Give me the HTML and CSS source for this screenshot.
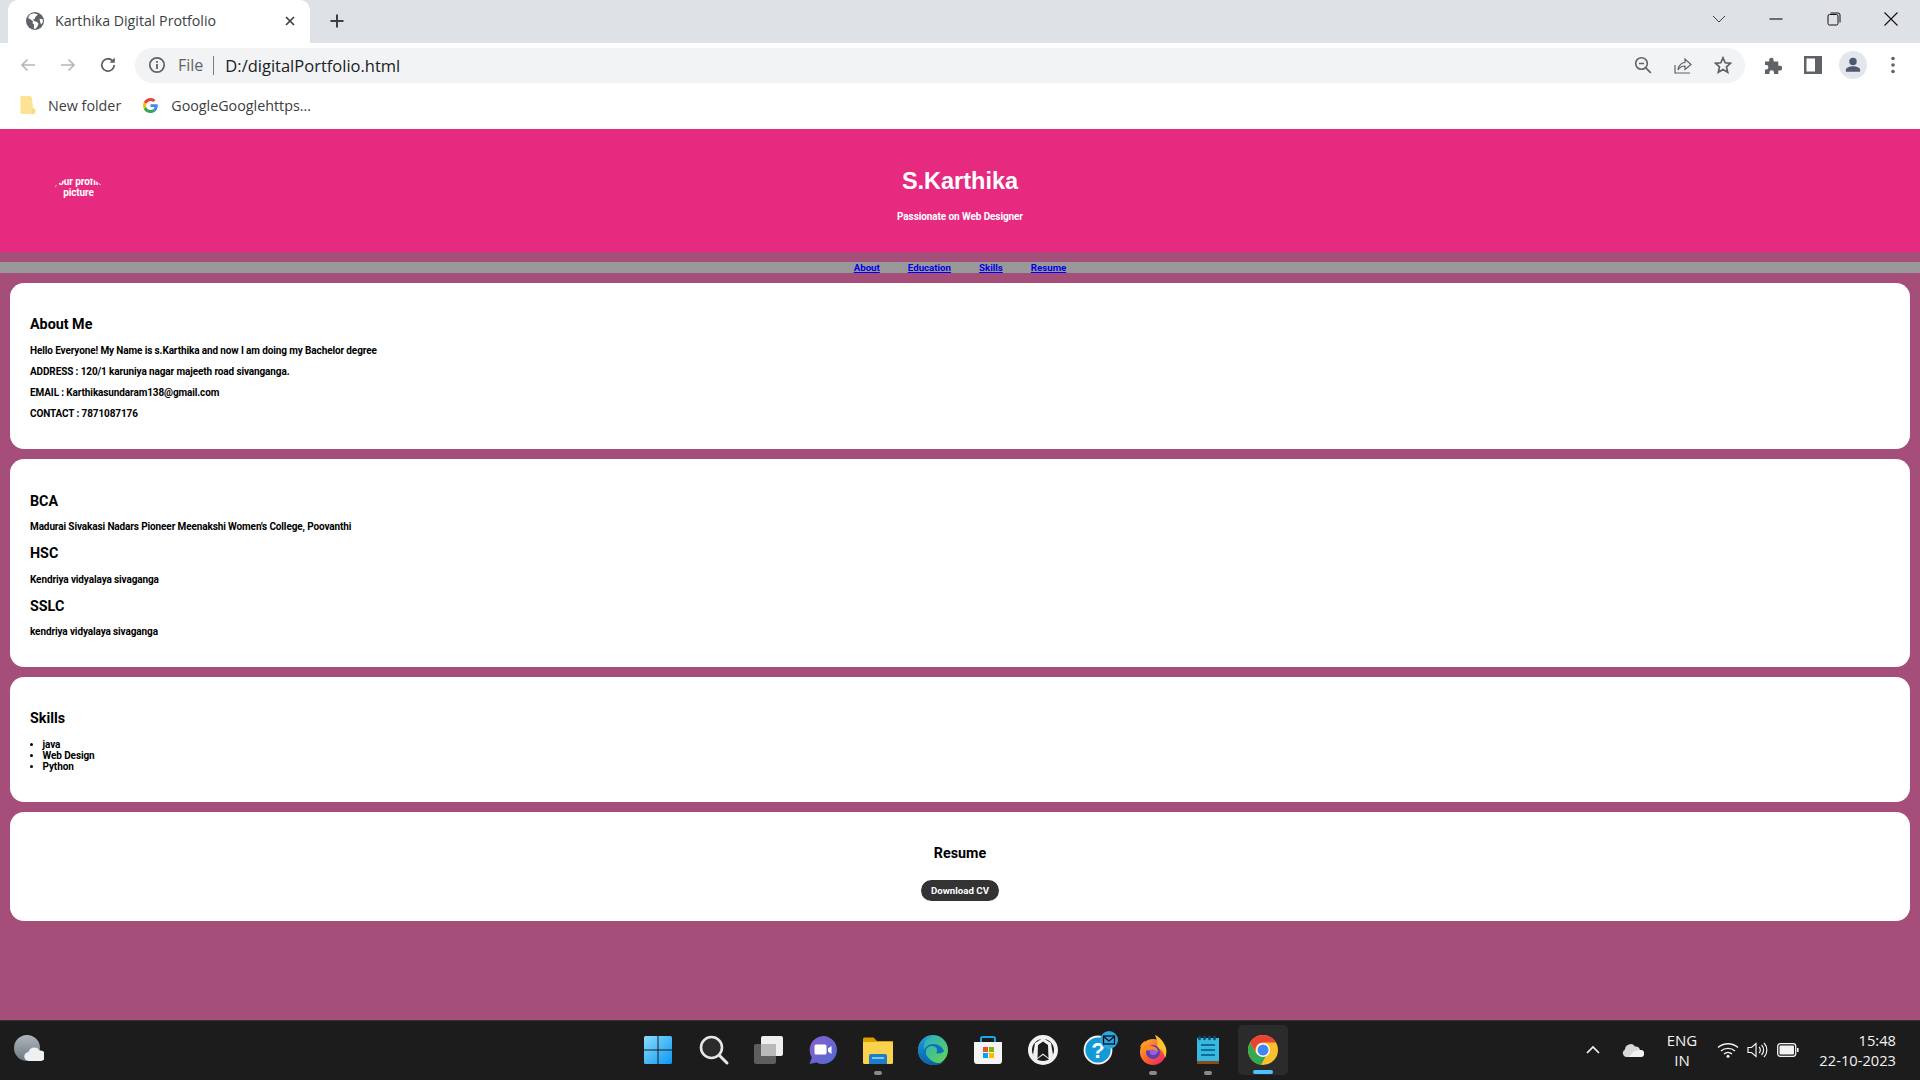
FILE: index.html
```html
<!DOCTYPE html>
<html lang="en">
<head>
<meta charset="utf-8">
<title>Karthika Digital Protfolio</title>
<link rel="stylesheet" href="styles.css">
</head>
<body>
<div class="screen">
  <div class="browser">
    <div class="tabstrip">
      <div class="tab">
        <svg class="tab-icon" viewBox="0 0 18 18"><circle cx="9" cy="9" r="9" fill="#5f6368"/><path d="M8 1.200 4 2.600 2 6l2.500 1.200L7 9.500l-.5 1.800 1.600 1.200-.3 4 1.600.4 2.200-2.600.9-2.600-1.300-1.600-3.200-1-1-1.400 1.600-.8.6-1.600L10.300 4 12 2.600Z" fill="#fff"/><path d="M13.500 6.800 16.700 7.200 16.900 10 15.200 12.500 14.200 10.200Z" fill="#fff"/></svg>
        <span class="tab-title">Karthika Digital Protfolio</span>
        <svg class="tab-close" viewBox="0 0 12 12"><path d="M2 2l8 8M10 2l-8 8" stroke="#3c4043" stroke-width="1.700" fill="none"/></svg>
      </div>
      <svg class="new-tab" viewBox="0 0 16 16"><path d="M8 1.500v13M1.500 8h13" stroke="#3c4043" stroke-width="2" fill="none"/></svg>
      <div class="window-controls">
        <span class="win-btn"><svg viewBox="0 0 14 14"><path d="M1 4l6 6 6-6" stroke="#3c4043" fill="none"/></svg></span>
        <span class="win-btn"><svg viewBox="0 0 14 14"><path d="M.5 7h13" stroke="#111" stroke-width="1.100" fill="none"/></svg></span>
        <span class="win-btn"><svg viewBox="0 0 14 14"><rect x="1" y="2.500" width="10" height="10.500" rx="1.500" stroke="#111" fill="none"/><path d="M3.500 1h7.500a2 2 0 0 1 2 2v7.500" stroke="#111" fill="none"/></svg></span>
        <span class="win-btn"><svg viewBox="0 0 14 14"><path d="M.5.5l13 13M13.500.5l-13 13" stroke="#111" stroke-width="1.100" fill="none"/></svg></span>
      </div>
    </div>
    <div class="toolbar">
      <span class="tool-btn"><svg viewBox="0 0 18 18"><path d="M16 9H3M8.500 3.500 3 9l5.500 5.500" stroke="#b4b7bb" stroke-width="1.700" fill="none"/></svg></span>
      <span class="tool-btn"><svg viewBox="0 0 18 18"><path d="M2 9h13M9.500 3.500 15 9l-5.500 5.500" stroke="#b4b7bb" stroke-width="1.700" fill="none"/></svg></span>
      <span class="tool-btn"><svg viewBox="0 0 18 18"><path d="M15.200 9a6.200 6.200 0 1 1-1.800-4.400" stroke="#5f6368" stroke-width="1.800" fill="none"/><path d="M15.800 1.500v5.300h-5.300Z" fill="#5f6368"/></svg></span>
      <div class="omnibox">
        <svg class="info-icon" viewBox="0 0 18 18"><circle cx="9" cy="9" r="7.200" stroke="#5f6368" stroke-width="1.700" fill="none"/><path d="M9 8v5M9 5v1.700" stroke="#5f6368" stroke-width="1.800"/></svg>
        <span class="scheme">File</span>
        <span class="sep"></span>
        <span class="url">D:/digitalPortfolio.html</span>
        <span class="omni-actions">
          <span class="tool-btn"><svg viewBox="0 0 18 18"><circle cx="7.500" cy="7.500" r="5.800" stroke="#5f6368" stroke-width="1.600" fill="none"/><path d="M5 7.500h5M11.800 11.800l5 5" stroke="#5f6368" stroke-width="1.700" fill="none"/></svg></span>
          <span class="tool-btn"><svg viewBox="0 0 18 18"><path d="M1 9v8h15M4 14c.5-5 4-7.500 7-7.500V3l6 5.500-6 5v-3.500c-3 0-5.500 1.500-7 4Z" stroke="#5f6368" stroke-width="1.200" fill="none"/></svg></span>
          <span class="tool-btn"><svg viewBox="0 0 18 18"><path d="M9 1.800l2.200 5 5.300.5-4 3.600 1.200 5.300L9 13.400l-4.700 2.800 1.200-5.300-4-3.600 5.300-.5Z" stroke="#5f6368" stroke-width="1.700" fill="none"/></svg></span>
        </span>
      </div>
      <div class="toolbar-actions">
        <span class="tool-btn"><svg viewBox="0 0 18 18"><path d="M1 5.500h4.200V4a2.200 2.200 0 0 1 4.400 0v1.500h4.700v4.300H16a2.300 2.300 0 0 1 0 4.600h-1.700V18H10v-1.500a2.300 2.300 0 0 0-4.600 0V18H1v-4.500h1.200a2.200 2.200 0 0 0 0-4.400H1Z" fill="#5f6368"/></svg></span>
        <span class="tool-btn"><svg viewBox="0 0 18 18"><rect width="18" height="18" fill="#5f6368"/><rect x="2.500" y="2.500" width="8.500" height="13" fill="#fff"/></svg></span>
        <span class="tool-btn"><span class="avatar"><svg viewBox="0 0 18 18"><circle cx="9" cy="5" r="4.200" fill="#4d5a70"/><path d="M1 16.500v-2.200c0-2.300 4.500-3.800 8-3.800s8 1.500 8 3.800v2.200Z" fill="#4d5a70"/></svg></span></span>
        <span class="tool-btn"><svg viewBox="0 0 18 18"><circle cx="9" cy="2.500" r="1.800" fill="#5f6368"/><circle cx="9" cy="9" r="1.800" fill="#5f6368"/><circle cx="9" cy="15.500" r="1.800" fill="#5f6368"/></svg></span>
      </div>
    </div>
    <div class="bookmarks">
      <span class="bookmark">
        <svg class="bm-folder" viewBox="0 0 16 18"><path d="M1.500 0h9l1.500 2 1 10.500h1.500a1 1 0 0 1 1 1V17a1 1 0 0 1-1 1H1.500a1 1 0 0 1-1-1V1a1 1 0 0 1 1-1Z" fill="#fde293"/><path d="M13 12.500V18" stroke="#f5cf6c"/></svg>
        New folder
      </span>
      <span class="bookmark bookmark-g">
        <svg class="bm-g" viewBox="0 0 48 48"><path fill="#EA4335" d="M24 9.500c3.500 0 6.700 1.200 9.200 3.600l6.900-6.900C35.900 2.400 30.500 0 24 0 14.600 0 6.500 5.400 2.600 13.200l8 6.200C12.400 13.700 17.700 9.500 24 9.500z"/><path fill="#4285F4" d="M47 24.500c0-1.600-.1-3.100-.4-4.500H24v9h12.900c-.6 3-2.200 5.500-4.700 7.200l7.700 6C44.400 37.900 47 31.800 47 24.500z"/><path fill="#FBBC05" d="M10.500 28.600c-.5-1.400-.8-3-.8-4.600s.3-3.200.8-4.600l-8-6.200C.9 16.500 0 20.100 0 24s.9 7.500 2.600 10.800z"/><path fill="#34A853" d="M24 48c6.500 0 11.900-2.100 15.900-5.800l-7.700-6c-2.200 1.400-4.900 2.300-8.200 2.300-6.300 0-11.600-4.200-13.500-9.900l-8 6.200C6.500 42.600 14.600 48 24 48z"/></svg>
        GoogleGooglehttps...
      </span>
    </div>
  </div>

  <main class="page">
    <header class="hero">
      <div class="logo">your profile picture</div>
      <div class="hero-center">
        <h1 class="hero-title">S.Karthika</h1>
        <p class="hero-sub">Passionate on Web Designer</p>
      </div>
    </header>
    <nav class="nav">
      <a href="#about">About</a>
      <a href="#education">Education</a>
      <a href="#skills">Skills</a>
      <a href="#resume">Resume</a>
    </nav>
    <section class="card" id="about">
      <h2 class="heading">About Me</h2>
      <p class="line">Hello Everyone! My Name is s.Karthika and now I am doing my Bachelor degree</p>
      <p class="line">ADDRESS : 120/1 karuniya nagar majeeth road sivanganga.</p>
      <p class="line">EMAIL : Karthikasundaram138@gmail.com</p>
      <p class="line">CONTACT : 7871087176</p>
    </section>
    <section class="card card-edu" id="education">
      <h3 class="heading">BCA</h3>
      <p class="line">Madurai Sivakasi Nadars Pioneer Meenakshi Women's College, Poovanthi</p>
      <h3 class="heading">HSC</h3>
      <p class="line">Kendriya vidyalaya sivaganga</p>
      <h3 class="heading">SSLC</h3>
      <p class="line">kendriya vidyalaya sivaganga</p>
    </section>
    <section class="card" id="skills">
      <h2 class="heading">Skills</h2>
      <ul class="skill-list">
        <li>java</li>
        <li>Web Design</li>
        <li>Python</li>
      </ul>
    </section>
    <section class="card card-resume" id="resume">
      <h2 class="heading">Resume</h2>
      <a class="download" href="#resume">Download CV</a>
    </section>
  </main>

  <footer class="taskbar">
    <div class="task-left">
      <svg class="weather" viewBox="0 0 30 30"><defs><linearGradient id="wg" x1="0" y1="0" x2="0" y2="1"><stop offset="0" stop-color="#aeb6bc"/><stop offset="1" stop-color="#6f7981"/></linearGradient></defs><circle cx="13" cy="13" r="13" fill="url(#wg)"/><path d="M15 26a4.500 4.500 0 0 1-.5-9 6 6 0 0 1 11-1.500A5.200 5.200 0 0 1 27 26Z" fill="#eef0f2"/></svg>
    </div>
    <div class="task-center">
      <span class="task-item"><svg viewBox="0 0 30 30"><defs><linearGradient id="st" x1="0" y1="0" x2="1" y2="1"><stop offset="0" stop-color="#8adcfb"/><stop offset="1" stop-color="#0c98f2"/></linearGradient></defs><path d="M1 2.500A1.500 1.500 0 0 1 2.500 1h12v13.500H1ZM15.500 1h12A1.500 1.500 0 0 1 29 2.500v12H15.500ZM1 15.500h13.500V29h-12A1.500 1.500 0 0 1 1 27.500ZM15.500 15.500H29v12a1.500 1.500 0 0 1-1.500 1.500h-12Z" fill="url(#st)"/></svg></span>
      <span class="task-item"><svg viewBox="0 0 30 30"><circle cx="13.500" cy="12.500" r="10.500" fill="#2b2b2b" stroke="#e6e6e6" stroke-width="2.600"/><path d="M21.500 20.500 29 28" stroke="#e6e6e6" stroke-width="3" stroke-linecap="round"/></svg></span>
      <span class="task-item"><svg viewBox="0 0 30 30"><rect x="8" y="1" width="22" height="20" rx="2" fill="#efefef"/><rect x="1" y="9" width="22" height="20" rx="2" fill="#666" fill-opacity=".9"/><rect x="8" y="9" width="15" height="12" fill="#b9b9b9"/></svg></span>
      <span class="task-item"><svg viewBox="0 0 30 30"><defs><linearGradient id="ch" x1="0" y1="0" x2="1" y2="1"><stop offset="0" stop-color="#8a5fd0"/><stop offset="1" stop-color="#4f6bd0"/></linearGradient></defs><path d="M15 1a14 14 0 1 1-6.500 26.400L1.500 29l2.300-6.500A14 14 0 0 1 15 1Z" fill="url(#ch)"/><rect x="6.500" y="9.500" width="12" height="10" rx="1.500" fill="#fff"/><path d="M20 13.500l3.500-2.500v8l-3.500-2.500Z" fill="#fff"/></svg></span>
      <span class="task-item task-open"><svg viewBox="0 0 30 30"><path d="M0 4a1.500 1.500 0 0 1 1.500-1.500h9L14 6h16v4H0Z" fill="#d9a000"/><path d="M0 7h28.500a1.500 1.500 0 0 1 1.500 1.500V27.500a1.500 1.500 0 0 1-1.500 1.500H1.500A1.500 1.500 0 0 1 0 27.500Z" fill="#fbd24e"/><path d="M6 29v-8a2 2 0 0 1 2-2h14a2 2 0 0 1 2 2v8Z" fill="#1c7ec9"/><rect x="9" y="22" width="12" height="2" fill="#7ec6f0"/></svg></span>
      <span class="task-item"><svg viewBox="0 0 30 30"><defs><linearGradient id="ed1" x1="0" y1="0" x2="1" y2="1"><stop offset="0" stop-color="#1fa8d8"/><stop offset="1" stop-color="#68d84a"/></linearGradient><linearGradient id="ed2" x1="0" y1="0" x2="0" y2="1"><stop offset="0" stop-color="#1b9de2"/><stop offset="1" stop-color="#0d5ea8"/></linearGradient></defs><circle cx="15" cy="15" r="15" fill="url(#ed1)"/><path d="M0 15C1 6 8 1 15 1c-7 2-9 6-9 11 0 8 7 16 15 16 3 0 5-1 6-2-3 3-7 4-12 4C7 30 0 24 0 15Z" fill="url(#ed2)"/><path d="M6 17c0-5 5-8 9-8 6 0 9 3 11 7-1 2-5 3-8 2 1-1 1-2 1-3 0-3-3-4-5-4-5 0-7 4-6 9 1 3 3 6 6 8-5-1-8-6-8-11Z" fill="#0e6fc0"/></svg></span>
      <span class="task-item"><svg viewBox="0 0 30 30"><path d="M8 7V3.500A1.500 1.500 0 0 1 9.500 2h11A1.500 1.500 0 0 1 22 3.500V7" stroke="#19a5e8" stroke-width="2" fill="none"/><path d="M1 7h28v19a3 3 0 0 1-3 3H4a3 3 0 0 1-3-3Z" fill="#f4f4f4"/><rect x="10" y="12" width="5" height="5" fill="#f25022"/><rect x="16" y="12" width="5" height="5" fill="#7fba00"/><rect x="10" y="18" width="5" height="5" fill="#00a4ef"/><rect x="16" y="18" width="5" height="5" fill="#ffb900"/></svg></span>
      <span class="task-item"><svg viewBox="0 0 30 30"><circle cx="15" cy="15" r="13" fill="none" stroke="#f2f2f2" stroke-width="4"/><path d="M5 20 7 8l8-5 8 5 2 12-3 5-7-5-7 5Z" fill="#f2f2f2"/><path d="M9.500 23 10 10l5-3.500L20 10l.5 13-5.500-4.500Z" fill="#1c1c1c"/></svg></span>
      <span class="task-item"><svg viewBox="-3 2 36 34" class="task-wide"><circle cx="15" cy="19" r="13.500" fill="#139ad6" stroke="#f2f2f2" stroke-width="1.800"/><text x="15" y="27" class="help-mark">?</text><circle cx="26" cy="9" r="9" fill="#2aa6e4"/><rect x="20.500" y="5" width="11" height="8" fill="none" stroke="#101010" stroke-width="1.300"/><path d="M20.500 5.500 26 10l5.500-4.500" fill="none" stroke="#101010" stroke-width="1.200"/></svg></span>
      <span class="task-item task-open"><svg viewBox="0 0 30 30"><defs><linearGradient id="ff" x1="0" y1="0" x2="1" y2="1"><stop offset="0" stop-color="#ffbd2e"/><stop offset=".55" stop-color="#ff5a2b"/><stop offset="1" stop-color="#e3197c"/></linearGradient></defs><circle cx="15" cy="17" r="13" fill="url(#ff)"/><path d="M17 0c3 1 9 6 11 13 1 4 0 8-1 10-1-6-5-10-8-10 1-4 0-9-2-13Z" fill="#ffc12e"/><path d="M2 12c1-3 3-5 5-6 0 2 1 3 2 3-2 2-5 3-7 3Z" fill="#ff9a1f"/><circle cx="15" cy="17" r="7" fill="#5b3fb3"/><circle cx="15.500" cy="16" r="4" fill="#9a5fdc"/><path d="M3 14c3-2 6-4 11-3 3 .5 6 3 6 6-2-2-5-3-8-2-3 1-6 0-9-1Z" fill="#ff8a23"/></svg></span>
      <span class="task-item task-open"><svg viewBox="0 0 30 30"><rect x="4" y="3" width="22" height="24" fill="#39b8e0"/><rect x="4" y="26" width="22" height="3" fill="#8a4a1a"/><path d="M6.500 2v2M11.500 2v2M16.500 2v2M21.500 2v2" stroke="#0a4e70" stroke-width="2.600" stroke-linecap="round"/><path d="M8 10h14M8 15h14M8 20h14" stroke="#0d6e96" stroke-width="2"/></svg></span>
      <span class="task-item task-active"><svg viewBox="0 0 30 30"><circle cx="15" cy="15" r="15" fill="#fbc02d"/><path d="M15 0a15 15 0 0 0-13 7.500L8 18a7.500 7.500 0 0 1 7-10.500h13A15 15 0 0 0 15 0Z" fill="#ea4335"/><path d="M2 7.500A15 15 0 0 0 13 29.900L19 19a7.500 7.500 0 0 1-11-1Z" fill="#34a853"/><circle cx="15" cy="15" r="7" fill="#fff"/><circle cx="15" cy="15" r="5.500" fill="#4285f4"/></svg></span>
    </div>
    <div class="tray">
      <svg class="tray-chev" viewBox="0 0 16 16"><path d="M2 11l6-6 6 6" stroke="#f2f2f2" stroke-width="1.700" fill="none"/></svg>
      <svg class="tray-cloud" viewBox="0 0 22 14"><path d="M4 14a4 4 0 0 1-1-7.500 5.500 5.500 0 0 1 10-3A4.500 4.500 0 0 1 18 7a3.500 3.500 0 0 1 1 7Z" fill="#d8d8d8"/><path d="M7 14l5-6 6-1a3.500 3.500 0 0 1 1 7Z" fill="#f2f2f2"/></svg>
      <div class="tray-lang"><span>ENG</span><span>IN</span></div>
      <svg class="tray-icon tray-wifi" viewBox="0 0 22 16"><path d="M1 5.500c5.500-5 14.500-5 20 0M4 9c3.800-3.500 10.200-3.500 14 0M7 12c2.300-2 5.700-2 8 0" stroke="#f2f2f2" stroke-width="1.400" fill="none"/><circle cx="11" cy="14.300" r="1.500" fill="#f2f2f2"/></svg>
      <svg class="tray-icon" viewBox="0 0 22 16"><path d="M1 5.500h3.500L9 1.500v13l-4.500-4H1Z" stroke="#f2f2f2" stroke-width="1.200" fill="none"/><path d="M12 5a4 4 0 0 1 0 6M14.500 3a7 7 0 0 1 0 10M17 1a10 10 0 0 1 0 14" stroke="#f2f2f2" stroke-width="1.200" fill="none"/></svg>
      <svg class="tray-icon" viewBox="0 0 22 14"><rect x=".7" y=".7" width="18" height="12.600" rx="2.500" stroke="#f2f2f2" stroke-width="1.300" fill="none"/><rect x="2.500" y="2.500" width="14.500" height="9" rx="1" fill="#f2f2f2"/><rect x="20" y="5" width="1.600" height="4" fill="#f2f2f2"/></svg>
      <div class="tray-clock"><span>15:48</span><span>22-10-2023</span></div>
    </div>
  </footer>
</div>
</body>
</html>
```
FILE: styles.css
```css
* { box-sizing: border-box; }
html, body { margin: 0; padding: 0; }
body { width: 1920px; height: 1080px; overflow: hidden; font-family: "Roboto", "Liberation Sans", sans-serif; }
.screen { display: flex; flex-direction: column; height: 1080px; }

/* browser chrome */
.browser { height: 129px; background: #fff; display: flex; flex-direction: column; font-family: "Open Sans", "Noto Sans", sans-serif; }
.tabstrip { height: 43px; background: #dee1e6; display: flex; align-items: flex-end; padding-left: 8px; }
.tab { width: 302px; height: 43px; background: #fff; border-radius: 10px 10px 0 0; display: flex; align-items: center; padding: 0 14px 2px 18px; }
.tab-icon { width: 18px; height: 18px; flex: none; }
.tab-title { margin-left: 11px; flex: 1; font-size: 14.200px; color: #3c4043; white-space: nowrap; }
.tab-close { width: 12px; height: 12px; flex: none; }
.new-tab { width: 16px; height: 16px; margin: 0 0 14px 19px; flex: none; }
.window-controls { margin-left: auto; display: flex; align-self: stretch; }
.win-btn { width: 57.500px; display: flex; align-items: center; justify-content: center; padding-bottom: 6px; }
.win-btn svg { width: 14px; height: 14px; }
.toolbar { height: 44px; display: flex; align-items: center; padding: 0 7px 0 7.500px; }
.tool-btn { width: 40px; height: 35px; flex: none; display: flex; align-items: center; justify-content: center; }
.tool-btn svg { width: 18px; height: 18px; }
.omnibox { flex: 1; height: 35px; margin-left: 7.500px; background: #f1f3f4; border-radius: 18px; display: flex; align-items: center; padding: 0 2px 0 13px; }
.info-icon { width: 18px; height: 18px; flex: none; }
.scheme { margin-left: 12px; font-size: 16px; color: #5f6368; }
.sep { width: 1px; height: 19px; background: #7a7d80; margin: 0 11px 0 10px; }
.url { font-size: 16.500px; color: #202124; }
.omni-actions { margin-left: auto; display: flex; }
.toolbar-actions { display: flex; margin-left: 8px; }
.avatar { width: 28px; height: 28px; border-radius: 50%; background: #e3e6ec; display: flex; align-items: center; justify-content: center; }
.avatar svg { width: 16px; height: 16px; }
.bookmarks { height: 42px; display: flex; align-items: center; padding: 0 0 6px 20px; font-size: 14.300px; color: #3c4043; }
.bookmark { display: flex; align-items: center; }
.bookmark-g { margin-left: 22px; }
.bm-folder { width: 16px; height: 18px; margin-right: 12px; }
.bm-g { width: 15px; height: 15px; margin-right: 13px; }

/* page */
.page { flex: 1; background: #a54e7a; min-height: 0; font-weight: 700; color: #000; }
.hero { height: 123px; background: #e62a7f; display: grid; grid-template-columns: 1fr auto 1fr; color: #fff; }
.logo { width: 64px; height: 64px; margin: 47px 0 0 46.500px; border-radius: 50%; overflow: hidden; text-align: center; font-size: 10px; letter-spacing: -.1px; line-height: 11px; }
.hero-center { text-align: center; padding-top: 37px; }
.hero-title { margin: 0; font-size: 23.500px; line-height: 30px; font-family: "Liberation Sans", sans-serif; }
.hero-sub { margin: 15px 0 0; font-size: 10px; letter-spacing: -.1px; line-height: 11px; }
.nav { height: 11px; margin: 10px 0; background: #999; display: flex; justify-content: center; gap: 28px; font-size: 9.700px; line-height: 11px; }
.nav a { color: #00e; }
.card { margin: 0 10px 10px; padding: 20px; background: #fff; border-radius: 14px; }
.card-edu { padding-top: 21px; padding-bottom: 29.500px; }
.heading { margin: 13px 0; font-size: 14.300px; line-height: 16px; }
.line { margin: 10px 0; font-size: 10px; letter-spacing: -.12px; line-height: 11px; }
.line:last-child { margin-bottom: 9.500px; }
.heading + .line { margin-top: 12.500px; }
.card-edu .line { margin-bottom: 12px; }
.card-edu .line:last-child { margin-bottom: 0; }
.card-edu .heading { margin-bottom: 12px; }
.skill-list { margin: 13px 0 10.500px; padding-left: 12.500px; font-size: 10px; letter-spacing: -.1px; line-height: 11px; }
.card-resume { text-align: center; height: 109px; }
.download { display: inline-block; width: 78px; height: 21px; margin-top: 6px; background: #333; color: #fff; border-radius: 11px; font-size: 9.700px; line-height: 21px; text-decoration: none; }

/* taskbar */
.taskbar { height: 60px; background: #1c1c1c; border-top: 1px solid #333; display: grid; grid-template-columns: 1fr auto 1fr; align-items: center; font-family: "Open Sans", "Noto Sans", sans-serif; color: #f2f2f2; padding-bottom: 1px; }
.task-left { display: flex; padding-left: 14px; }
.weather { width: 30px; height: 30px; }
.task-center { display: flex; }
.task-item { position: relative; width: 55px; height: 50px; display: flex; align-items: center; justify-content: center; }
.task-item svg { width: 30px; height: 30px; overflow: visible; }
.task-item .task-wide { width: 36px; height: 34px; }
.help-mark { font-family: "Liberation Sans", sans-serif; font-size: 22px; font-weight: 700; fill: #fff; text-anchor: middle; }
.task-open::after { content: ""; position: absolute; left: 50%; bottom: 0; width: 8px; height: 4px; margin-left: -4px; border-radius: 2px; background: #8a8a8a; }
.task-active::before { content: ""; position: absolute; left: 2.500px; right: 2.500px; top: 0; bottom: 0; border-radius: 5px; background: #2b2b2b; }
.task-active svg { position: relative; }
.task-active::after { content: ""; position: absolute; left: 50%; bottom: 1px; width: 20px; height: 4px; margin-left: -10px; border-radius: 2px; background: #4cc2ff; }
.tray { display: flex; align-items: center; justify-content: flex-end; padding-right: 24px; }
.tray-chev { width: 16px; height: 16px; margin-right: 21px; }
.tray-cloud { width: 22px; height: 14px; margin-right: 18px; }
.tray-lang { width: 40px; display: flex; flex-direction: column; align-items: center; font-size: 15px; line-height: 20px; margin-right: 15px; }
.tray-icon { width: 22px; height: 16px; margin-right: 8px; }
.tray-clock { width: 78px; margin-left: 11px; display: flex; flex-direction: column; align-items: flex-end; font-size: 14.700px; line-height: 20px; white-space: nowrap; }
```
